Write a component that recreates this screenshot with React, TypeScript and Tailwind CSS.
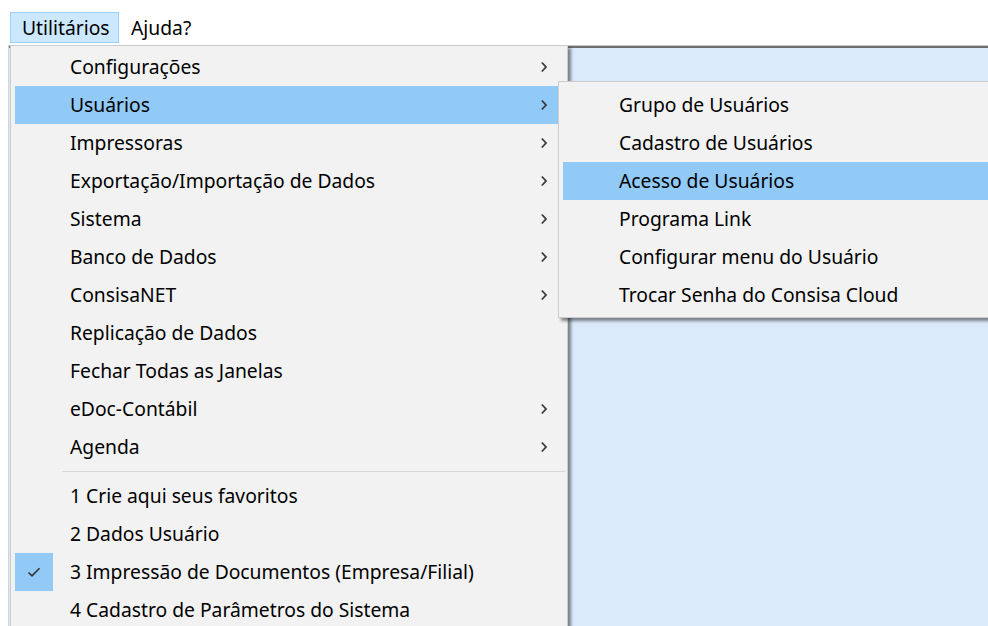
import { ReactNode } from 'react';

type Item = { label: string; sub?: boolean; active?: boolean; checked?: boolean };

const mainItems: Item[] = [
	{ label: 'Configurações', sub: true },
	{ label: 'Usuários', sub: true, active: true },
	{ label: 'Impressoras', sub: true },
	{ label: 'Exportação/Importação de Dados', sub: true },
	{ label: 'Sistema', sub: true },
	{ label: 'Banco de Dados', sub: true },
	{ label: 'ConsisaNET', sub: true },
	{ label: 'Replicação de Dados' },
	{ label: 'Fechar Todas as Janelas' },
	{ label: 'eDoc-Contábil', sub: true },
	{ label: 'Agenda', sub: true },
];

const favorites: Item[] = [
	{ label: '1 Crie aqui seus favoritos' },
	{ label: '2 Dados Usuário' },
	{ label: '3 Impressão de Documentos (Empresa/Filial)', checked: true },
	{ label: '4 Cadastro de Parâmetros do Sistema' },
];

const userItems: Item[] = [
	{ label: 'Grupo de Usuários' },
	{ label: 'Cadastro de Usuários' },
	{ label: 'Acesso de Usuários', active: true },
	{ label: 'Programa Link' },
	{ label: 'Configurar menu do Usuário' },
	{ label: 'Trocar Senha do Consisa Cloud' },
];

const Chevron = () => (
	<svg width="8" height="12" viewBox="0 0 8 12" className="shrink-0">
		<path d="M1.8 1.5 L6 6 L1.8 10.5" fill="none" stroke="#3a3a3a" strokeWidth="1.8" />
	</svg>
);

const CheckMark = () => (
	<svg width="16" height="12" viewBox="0 0 16 12">
		<path d="M2.5 6.5 L6 9.8 L13.5 2.2" fill="none" stroke="#333" strokeWidth="1.6" />
	</svg>
);

const MenuRow = ({ item, slot = 38, gap = 17 }: { item: Item; slot?: number; gap?: number }) => (
	<div className={`flex items-center h-[38px] pr-[15px] ${item.active ? 'bg-[#91c9f7]' : ''}`}>
		<div
			className={`h-[38px] flex items-center justify-center shrink-0 ${item.checked ? 'bg-[#91c9f7]' : ''}`}
			style={{ width: slot, marginRight: gap }}
		>
			{item.checked && <CheckMark />}
		</div>
		<span className="flex-1 whitespace-nowrap">{item.label}</span>
		{item.sub && <Chevron />}
	</div>
);

const MenuPanel = ({ className, children }: { className: string; children: ReactNode }) => (
	<div
		className={`absolute bg-[#f2f2f2] border border-[#cccccc] shadow-[3px_3px_3px_rgba(0,0,0,0.45)] ${className}`}
	>
		{children}
	</div>
);

export default function App() {
	return (
		<div
			className="relative w-[988px] h-[626px] overflow-hidden bg-white flex flex-col text-[19.3px] text-black"
			style={{ fontFamily: '"Noto Sans", "Open Sans", sans-serif' }}
		>
			{/* menu bar */}
			<div className="h-[45px] shrink-0 flex items-start pt-[12px] pl-[10px] leading-none">
				<div className="h-[31px] w-[109px] pl-[11px] flex items-center border border-[#99d1ff] bg-[#cce8ff] whitespace-nowrap">
					Utilitários
				</div>
				<div className="h-[31px] pl-[11px] flex items-center border border-transparent">Ajuda?</div>
			</div>

			{/* MDI client area */}
			<div className="flex-1 pl-[8px] flex">
				<div className="flex-1 border-l border-[#cdd5de] border-t border-t-[#c8c8c8]">
					<div className="h-full border-t-2 border-[#6e6e6e] bg-[#dbeafb]" />
				</div>
			</div>

			{/* Utilitários dropdown */}
			<MenuPanel className="left-[10px] top-[45px] w-[558px] h-[600px] px-[4px] py-[2px]">
				{mainItems.map((item) => (
					<MenuRow key={item.label} item={item} />
				))}
				<div className="h-[11px] flex items-center pl-[47px] -mr-[2px]">
					<div className="h-px w-full bg-[#d7d7d7]" />
				</div>
				{favorites.map((item) => (
					<MenuRow key={item.label} item={item} />
				))}
			</MenuPanel>

			{/* Usuários submenu */}
			<MenuPanel className="left-[558px] top-[81px] w-[436px] px-[4px] pt-[4px] pb-[3px]">
				{userItems.map((item) => (
					<MenuRow key={item.label} item={item} slot={39} gap={17} />
				))}
			</MenuPanel>
		</div>
	);
}
